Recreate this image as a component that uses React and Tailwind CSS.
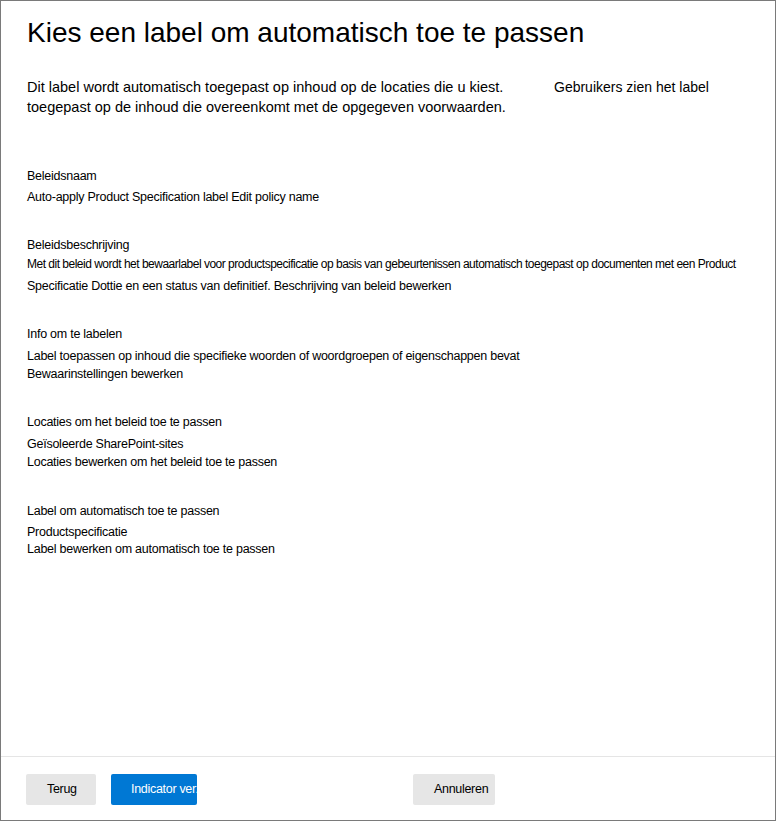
import React from 'react'

const sections = [
  {
    label: 'Beleidsnaam',
    box: 'mt-[2px] leading-[18px]',
    lines: ['Auto-apply Product Specification label Edit policy name'],
  },
  {
    label: 'Beleidsbeschrijving',
    gap: 'mt-[29px]',
    box: 'mt-[-2px] leading-[22px]',
    lines: [
      'Met dit beleid wordt het bewaarlabel voor productspecificatie op basis van gebeurtenissen automatisch toegepast op documenten met een Product',
      'Specificatie Dottie en een status van definitief. Beschrijving van beleid bewerken',
    ],
  },
  {
    label: 'Info om te labelen',
    gap: 'mt-[27px]',
    box: 'mt-[3px] leading-[18px]',
    lines: [
      'Label toepassen op inhoud die specifieke woorden of woordgroepen of eigenschappen bevat',
      'Bewaarinstellingen bewerken',
    ],
  },
  {
    label: 'Locaties om het beleid toe te passen',
    gap: 'mt-[29px]',
    box: 'mt-[3px] leading-[18px]',
    lines: ['Geïsoleerde SharePoint-sites', 'Locaties bewerken om het beleid toe te passen'],
  },
  {
    label: 'Label om automatisch toe te passen',
    gap: 'mt-[30px]',
    box: 'mt-[3px] leading-[17px]',
    lines: ['Productspecificatie', 'Label bewerken om automatisch toe te passen'],
  },
]

export default function App() {
  return (
    <div className="h-[822px] w-[777px] bg-white" style={{ fontFamily: '"Liberation Sans", Arial, sans-serif' }}>
      <div className="flex h-[821px] w-[776px] flex-col border border-[#7a7a7a] text-black">
        <div className="flex-1 pl-[26px]">
          <h1 className="mt-[15px] text-[28px] leading-[34px]">Kies een label om automatisch toe te passen</h1>

          <div className="mt-[27px] flex leading-[20px]">
            <div className="w-[527px] shrink-0 text-[14.5px]">
              <p>Dit label wordt automatisch toegepast op inhoud op de locaties die u kiest.</p>
              <p>toegepast op de inhoud die overeenkomt met de opgegeven voorwaarden.</p>
            </div>
            <p className="text-[14px]">Gebruikers zien het label</p>
          </div>

          <div className="mt-[49px] text-[12.5px] tracking-[-0.25px]">
            {sections.map((s) => (
              <div key={s.label} className={s.gap}>
                <div className="leading-[20px]">{s.label}</div>
                <div className={s.box + ' whitespace-nowrap'}>
                  {s.lines.map((l, i) => (
                    <div key={l} className={s.lines[0].length > 120 && i === 0 ? 'text-[12px] tracking-[-0.5px]' : ''}>
                      {l}
                    </div>
                  ))}
                </div>
              </div>
            ))}
          </div>
        </div>

        <div className="flex h-[64px] items-start border-t border-[#e5e5e5] pt-[17px] pl-[25px] text-[12.5px] tracking-[-0.3px]">
          <button className="h-[31px] w-[70px] rounded-[2px] bg-[#e6e6e6] pl-[21px] text-left text-black">Terug</button>
          <button className="ml-[15px] h-[31px] w-[86px] overflow-hidden whitespace-nowrap rounded-[2px] bg-[#0078d4] pl-[20px] text-left text-white">
            Indicator verzenden
          </button>
          <button className="ml-[216px] h-[31px] w-[82px] rounded-[2px] bg-[#e6e6e6] pl-[21px] text-left text-black">Annuleren</button>
        </div>
      </div>
    </div>
  )
}
